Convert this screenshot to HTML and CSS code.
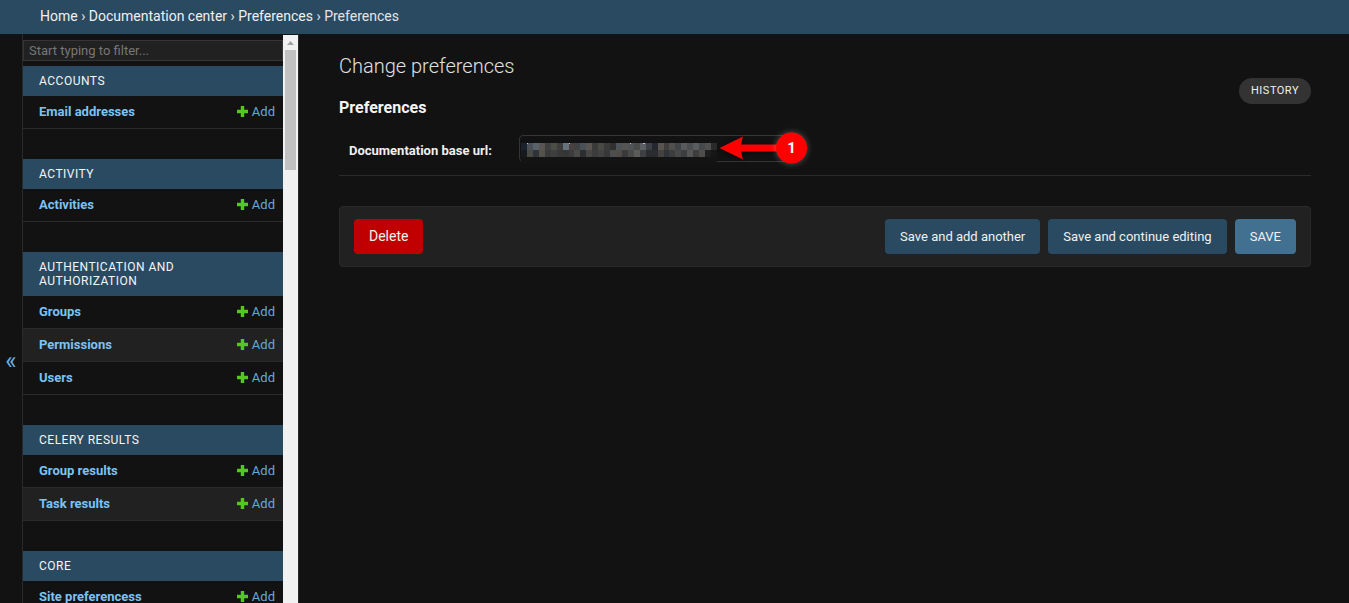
FILE: index.html
```html
<!DOCTYPE html>
<html lang="en">
<head>
<meta charset="utf-8">
<title>Change preferences</title>
<link rel="stylesheet" href="styles.css">
</head>
<body>
<header class="crumbs"><a>Home</a> › <a>Documentation center</a> › <a>Preferences</a> › Preferences</header>
<div class="main">
  <button class="toggle">«</button>
  <aside class="side">
    <nav class="nav">
      <input class="filter" placeholder="Start typing to filter...">
      <section class="app">
        <h2 class="cap">Accounts</h2>
        <div class="row"><a class="model">Email addresses</a><a class="add"><svg class="plus" viewBox="0 0 11 11"><path d="M3.800 0h3.400v3.800H11v3.400H7.200V11H3.800V7.200H0V3.800h3.800z"/></svg>Add</a></div>
      </section>
      <section class="app">
        <h2 class="cap">Activity</h2>
        <div class="row"><a class="model">Activities</a><a class="add"><svg class="plus" viewBox="0 0 11 11"><path d="M3.800 0h3.400v3.800H11v3.400H7.200V11H3.800V7.200H0V3.800h3.800z"/></svg>Add</a></div>
      </section>
      <section class="app">
        <h2 class="cap">Authentication and Authorization</h2>
        <div class="row"><a class="model">Groups</a><a class="add"><svg class="plus" viewBox="0 0 11 11"><path d="M3.800 0h3.400v3.800H11v3.400H7.200V11H3.800V7.200H0V3.800h3.800z"/></svg>Add</a></div>
        <div class="row alt"><a class="model">Permissions</a><a class="add"><svg class="plus" viewBox="0 0 11 11"><path d="M3.800 0h3.400v3.800H11v3.400H7.200V11H3.800V7.200H0V3.800h3.800z"/></svg>Add</a></div>
        <div class="row"><a class="model">Users</a><a class="add"><svg class="plus" viewBox="0 0 11 11"><path d="M3.800 0h3.400v3.800H11v3.400H7.200V11H3.800V7.200H0V3.800h3.800z"/></svg>Add</a></div>
      </section>
      <section class="app">
        <h2 class="cap">Celery Results</h2>
        <div class="row"><a class="model">Group results</a><a class="add"><svg class="plus" viewBox="0 0 11 11"><path d="M3.800 0h3.400v3.800H11v3.400H7.200V11H3.800V7.200H0V3.800h3.800z"/></svg>Add</a></div>
        <div class="row alt"><a class="model">Task results</a><a class="add"><svg class="plus" viewBox="0 0 11 11"><path d="M3.800 0h3.400v3.800H11v3.400H7.200V11H3.800V7.200H0V3.800h3.800z"/></svg>Add</a></div>
      </section>
      <section class="app">
        <h2 class="cap">Core</h2>
        <div class="row"><a class="model">Site preferencess</a><a class="add"><svg class="plus" viewBox="0 0 11 11"><path d="M3.800 0h3.400v3.800H11v3.400H7.200V11H3.800V7.200H0V3.800h3.800z"/></svg>Add</a></div>
      </section>
    </nav>
    <div class="scrollbar"><svg class="arrow" viewBox="0 0 7 4"><path d="M3.500 0L7 4H0z"/></svg><div class="thumb"></div></div>
  </aside>
  <main class="content">
    <div class="title-row">
      <h1 class="title">Change preferences</h1>
      <a class="history">History</a>
    </div>
    <h2 class="fs-title">Preferences</h2>
    <div class="form-row">
      <label class="lbl">Documentation base url:</label>
      <div class="field">
        <svg class="blur" viewBox="0 0 33 20" preserveAspectRatio="none" shape-rendering="crispEdges">
          <rect width="33" height="20" fill="#141414"/>
          <rect x="0" width="1" height="7" fill="#1a2230"/>
          <rect x="1" width="1" height="7" fill="#4a5058"/>
          <rect x="2" width="1" height="7" fill="#586268"/>
          <rect x="3" width="1" height="7" fill="#5a5550"/>
          <rect x="4" width="1" height="7" fill="#3f3f3f"/>
          <rect x="5" width="1" height="7" fill="#4d4d48"/>
          <rect x="6" width="1" height="7" fill="#3d3d3d"/>
          <rect x="7" width="1" height="7" fill="#66727c"/>
          <rect x="8" width="1" height="7" fill="#4a4040"/>
          <rect x="9" width="1" height="7" fill="#3f4245"/>
          <rect x="10" width="1" height="7" fill="#4a5058"/>
          <rect x="11" width="1" height="7" fill="#5a5550"/>
          <rect x="12" width="1" height="7" fill="#3a3a3a"/>
          <rect x="13" width="1" height="7" fill="#4a4a45"/>
          <rect x="14" width="1" height="7" fill="#3a3a3a"/>
          <rect x="15" width="1" height="7" fill="#303030"/>
          <rect x="16" width="1" height="7" fill="#4e5358"/>
          <rect x="17" width="1" height="7" fill="#555555"/>
          <rect x="18" width="1" height="7" fill="#4e5358"/>
          <rect x="19" width="1" height="7" fill="#4a4a4a"/>
          <rect x="20" width="1" height="7" fill="#5c6064"/>
          <rect x="21" width="1" height="7" fill="#3c3f44"/>
          <rect x="22" width="1" height="7" fill="#24282e"/>
          <rect x="23" width="1" height="7" fill="#5a544e"/>
          <rect x="24" width="1" height="7" fill="#3e3e3e"/>
          <rect x="25" width="1" height="7" fill="#50504c"/>
          <rect x="26" width="1" height="7" fill="#404448"/>
          <rect x="27" width="1" height="7" fill="#585a5c"/>
          <rect x="28" width="1" height="7" fill="#4c4e50"/>
          <rect x="29" width="1" height="7" fill="#5a5c5e"/>
          <rect x="30" width="1" height="7" fill="#46484a"/>
          <rect x="31" width="1" height="7" fill="#505050"/>
          <rect x="32" width="1" height="7" fill="#2a2a2a"/>
          <rect x="0" y="7" width="1" height="7" fill="#16191e"/>
          <rect x="1" y="7" width="1" height="7" fill="#4a4a44"/>
          <rect x="2" y="7" width="1" height="7" fill="#303338"/>
          <rect x="3" y="7" width="1" height="7" fill="#55524c"/>
          <rect x="4" y="7" width="1" height="7" fill="#3a3a3a"/>
          <rect x="5" y="7" width="1" height="7" fill="#3e3e3e"/>
          <rect x="6" y="7" width="1" height="7" fill="#383838"/>
          <rect x="7" y="7" width="1" height="7" fill="#363636"/>
          <rect x="8" y="7" width="1" height="7" fill="#3c3c3c"/>
          <rect x="9" y="7" width="1" height="7" fill="#4c4a46"/>
          <rect x="10" y="7" width="1" height="7" fill="#2c2e32"/>
          <rect x="11" y="7" width="1" height="7" fill="#484644"/>
          <rect x="12" y="7" width="1" height="7" fill="#3c3c3c"/>
          <rect x="13" y="7" width="1" height="7" fill="#424242"/>
          <rect x="14" y="7" width="1" height="7" fill="#383838"/>
          <rect x="15" y="7" width="1" height="7" fill="#4c4e50"/>
          <rect x="16" y="7" width="1" height="7" fill="#504c48"/>
          <rect x="17" y="7" width="1" height="7" fill="#383a3c"/>
          <rect x="18" y="7" width="1" height="7" fill="#4a4a48"/>
          <rect x="19" y="7" width="1" height="7" fill="#5c5c5a"/>
          <rect x="20" y="7" width="1" height="7" fill="#3e4042"/>
          <rect x="21" y="7" width="1" height="7" fill="#2a2c30"/>
          <rect x="22" y="7" width="1" height="7" fill="#2a2c30"/>
          <rect x="23" y="7" width="1" height="7" fill="#44423e"/>
          <rect x="24" y="7" width="1" height="7" fill="#30343a"/>
          <rect x="25" y="7" width="1" height="7" fill="#3a3c3e"/>
          <rect x="26" y="7" width="1" height="7" fill="#484848"/>
          <rect x="27" y="7" width="1" height="7" fill="#3c3e40"/>
          <rect x="28" y="7" width="1" height="7" fill="#565656"/>
          <rect x="29" y="7" width="1" height="7" fill="#403e3c"/>
          <rect x="30" y="7" width="1" height="7" fill="#504e4c"/>
          <rect x="31" y="7" width="1" height="7" fill="#1e1e1e"/>
          <rect x="32" y="7" width="1" height="7" fill="#161616"/>
          <g fill="#b8c4cc"><rect x="1" y="0" width="0.2" height="1"/><rect x="8" y="0" width="0.2" height="1"/><rect x="18.300" y="0" width="0.2" height="1"/><rect x="20.600" y="0" width="0.2" height="1"/></g>
        </svg>
      </div>
      <svg class="callout" viewBox="0 0 100 44">
        <path class="arrow-head" d="M5.500 22L29 10.500L27 18.500H64V25.500H27L29 33.500z"/>
        <circle class="badge-disc" cx="77.500" cy="22" r="15.500"/>
        <text class="badge-num" x="77.500" y="27" text-anchor="middle">1</text>
      </svg>
    </div>
    <div class="submit">
      <a class="btn danger">Delete</a>
      <span class="grow"></span>
      <a class="btn">Save and add another</a>
      <a class="btn">Save and continue editing</a>
      <a class="btn primary">SAVE</a>
    </div>
  </main>
</div>
</body>
</html>
```

FILE: styles.css
```css
* { box-sizing: border-box; }
html, body { margin: 0; height: 100%; overflow: hidden; }
body { background: #121212; color: #f5f5f5; font: 14px/18px Roboto, "Liberation Sans", sans-serif; }
a { color: inherit; text-decoration: none; }

.crumbs { height: 34px; background: #2a4a61; color: #e4e4e4; padding: 7px 40px 0; font-size: 14px; line-height: 18px; }
.crumbs a { color: #f0f0f0; }

.main { display: flex; height: 569px; }
.toggle { width: 23px; flex: none; background: #121212; color: #6cb0e0; border: 0; border-right: 1px solid #2a2a2a; padding: 84px 0 0; font: 24px/24px Roboto, sans-serif; }

.side { flex: none; width: 276px; display: flex; border-right: 1px solid #2a2a2a; overflow: hidden; }
.nav { width: 260px; flex: none; }
.filter { display: block; width: 260px; height: 21px; margin: 6px 0 5px; padding: 0 5px; background: #212121; border: 1px solid #353535; color: #eee; font: 13px Roboto, sans-serif; }
.filter::placeholder { color: #777; }
.app { margin-bottom: 30px; }
.cap { margin: 0; padding: 8px 16px; background: #2a4a61; color: #f5f5f5; font-size: 12px; font-weight: 400; line-height: 14px; letter-spacing: .5px; text-transform: uppercase; }
.row { display: flex; justify-content: space-between; height: 33px; padding: 7px 8px 0 16px; border-bottom: 1px solid #2a2a2a; font-size: 13px; }
.alt { background: #212121; }
.model { color: #7cc3f5; font-weight: 700; }
.add { color: #64a9dc; display: flex; align-items: center; height: 18px; }
.plus { width: 11px; height: 11px; margin: -2px 4px 0 0; fill: #55c81e; }

.scrollbar { width: 15px; flex: none; margin-top: 1px; background: #f1f1f1; }
.arrow { display: block; width: 7px; height: 4px; margin: 6px auto 5px; fill: #a3a3a3; }
.thumb { width: 11px; height: 120px; margin: 0 auto; background: #c1c1c1; }

.content { flex: 1; padding: 20px 38px 0 40px; min-width: 0; }
.title-row { position: relative; height: 24px; }
.title { margin: 0; font-size: 20px; font-weight: 300; line-height: 24px; color: #e0e0e0; }
.history { position: absolute; right: 0; top: 24px; height: 26px; padding: 0 12px; border-radius: 13px; background: #333; color: #f0f0f0; font-size: 11px; line-height: 25px; letter-spacing: .5px; text-transform: uppercase; }
.fs-title { margin: 20px 0 0; font-size: 16px; line-height: 19px; font-weight: 700; color: #f5f5f5; }

.form-row { position: relative; display: flex; align-items: center; height: 54px; margin-top: 5px; padding: 0 10px; border-bottom: 1px solid #2a2a2a; }
.lbl { width: 170px; flex: none; font-size: 13px; font-weight: 700; color: #f0f0f0; margin-top: 5px; }
.field { position: relative; width: 272px; height: 27px; border: 1px solid #353535; border-radius: 4px; background: #121212; }
.blur { position: absolute; left: 1px; top: 7px; display: block; width: 196px; height: 20px; }
.callout { position: absolute; left: 375px; top: 4px; width: 100px; height: 44px; overflow: visible; }
.arrow-head { fill: #f00; filter: drop-shadow(0 1px 2px rgba(0,0,0,.6)); }
.badge-disc { fill: #f00; filter: drop-shadow(0 0 3px rgba(255,255,255,.3)); }
.badge-num { fill: #fff; font: 700 15px Roboto, sans-serif; }

.submit { display: flex; align-items: center; gap: 8px; height: 61px; margin-top: 30px; padding: 0 14px; background: #212121; border: 1px solid #2a2a2a; border-radius: 4px; }
.grow { flex: 1; }
.btn { display: block; height: 35px; padding: 0 15px; line-height: 35px; background: #2a4a61; color: #f0f0f0; border-radius: 4px; font-size: 13px; }
.danger { background: #c00000; font-size: 14px; }
.primary { background: #417090; }
```
